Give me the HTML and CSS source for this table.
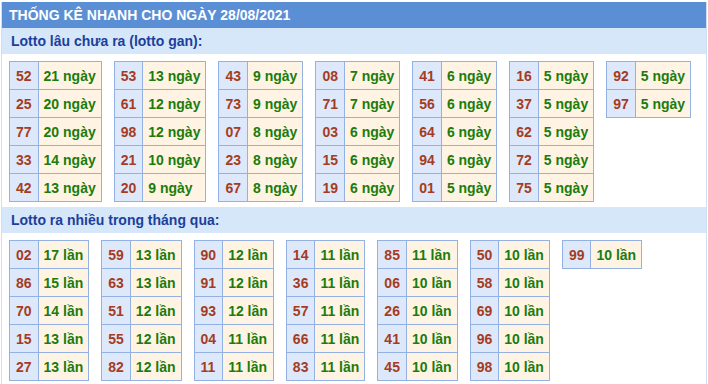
FILE: index.html
```html
<!DOCTYPE html>
<html lang="vi">
<head>
<meta charset="utf-8">
<link rel="stylesheet" href="styles.css">
</head>
<body>
<div class="box">
  <div class="head">THỐNG KÊ NHANH CHO NGÀY 28/08/2021</div>
  <div class="sub">Lotto lâu chưa ra (lotto gan):</div>
  <div class="grid">
    <table><tr><td class="n">52</td><td class="v">21 ngày</td></tr><tr><td class="n">25</td><td class="v">20 ngày</td></tr><tr><td class="n">77</td><td class="v">20 ngày</td></tr><tr><td class="n">33</td><td class="v">14 ngày</td></tr><tr><td class="n">42</td><td class="v">13 ngày</td></tr></table>
    <table><tr><td class="n">53</td><td class="v">13 ngày</td></tr><tr><td class="n">61</td><td class="v">12 ngày</td></tr><tr><td class="n">98</td><td class="v">12 ngày</td></tr><tr><td class="n">21</td><td class="v">10 ngày</td></tr><tr><td class="n">20</td><td class="v">9 ngày</td></tr></table>
    <table><tr><td class="n">43</td><td class="v">9 ngày</td></tr><tr><td class="n">73</td><td class="v">9 ngày</td></tr><tr><td class="n">07</td><td class="v">8 ngày</td></tr><tr><td class="n">23</td><td class="v">8 ngày</td></tr><tr><td class="n">67</td><td class="v">8 ngày</td></tr></table>
    <table><tr><td class="n">08</td><td class="v">7 ngày</td></tr><tr><td class="n">71</td><td class="v">7 ngày</td></tr><tr><td class="n">03</td><td class="v">6 ngày</td></tr><tr><td class="n">15</td><td class="v">6 ngày</td></tr><tr><td class="n">19</td><td class="v">6 ngày</td></tr></table>
    <table><tr><td class="n">41</td><td class="v">6 ngày</td></tr><tr><td class="n">56</td><td class="v">6 ngày</td></tr><tr><td class="n">64</td><td class="v">6 ngày</td></tr><tr><td class="n">94</td><td class="v">6 ngày</td></tr><tr><td class="n">01</td><td class="v">5 ngày</td></tr></table>
    <table><tr><td class="n">16</td><td class="v">5 ngày</td></tr><tr><td class="n">37</td><td class="v">5 ngày</td></tr><tr><td class="n">62</td><td class="v">5 ngày</td></tr><tr><td class="n">72</td><td class="v">5 ngày</td></tr><tr><td class="n">75</td><td class="v">5 ngày</td></tr></table>
    <table><tr><td class="n">92</td><td class="v">5 ngày</td></tr><tr><td class="n">97</td><td class="v">5 ngày</td></tr></table>
  </div>
  <div class="sub">Lotto ra nhiều trong tháng qua:</div>
  <div class="grid">
    <table><tr><td class="n">02</td><td class="v">17 lần</td></tr><tr><td class="n">86</td><td class="v">15 lần</td></tr><tr><td class="n">70</td><td class="v">14 lần</td></tr><tr><td class="n">15</td><td class="v">13 lần</td></tr><tr><td class="n">27</td><td class="v">13 lần</td></tr></table>
    <table><tr><td class="n">59</td><td class="v">13 lần</td></tr><tr><td class="n">63</td><td class="v">13 lần</td></tr><tr><td class="n">51</td><td class="v">12 lần</td></tr><tr><td class="n">55</td><td class="v">12 lần</td></tr><tr><td class="n">82</td><td class="v">12 lần</td></tr></table>
    <table><tr><td class="n">90</td><td class="v">12 lần</td></tr><tr><td class="n">91</td><td class="v">12 lần</td></tr><tr><td class="n">93</td><td class="v">12 lần</td></tr><tr><td class="n">04</td><td class="v">11 lần</td></tr><tr><td class="n">11</td><td class="v">11 lần</td></tr></table>
    <table><tr><td class="n">14</td><td class="v">11 lần</td></tr><tr><td class="n">36</td><td class="v">11 lần</td></tr><tr><td class="n">57</td><td class="v">11 lần</td></tr><tr><td class="n">66</td><td class="v">11 lần</td></tr><tr><td class="n">83</td><td class="v">11 lần</td></tr></table>
    <table><tr><td class="n">85</td><td class="v">11 lần</td></tr><tr><td class="n">06</td><td class="v">10 lần</td></tr><tr><td class="n">26</td><td class="v">10 lần</td></tr><tr><td class="n">41</td><td class="v">10 lần</td></tr><tr><td class="n">45</td><td class="v">10 lần</td></tr></table>
    <table><tr><td class="n">50</td><td class="v">10 lần</td></tr><tr><td class="n">58</td><td class="v">10 lần</td></tr><tr><td class="n">69</td><td class="v">10 lần</td></tr><tr><td class="n">96</td><td class="v">10 lần</td></tr><tr><td class="n">98</td><td class="v">10 lần</td></tr></table>
    <table><tr><td class="n">99</td><td class="v">10 lần</td></tr></table>
  </div>
</div>
</body>
</html>
```

FILE: styles.css
```css
html, body {
  margin: 0;
  padding: 0;
  background: #ffffff;
}
body {
  padding: 2px 0 0 0;
  font-family: "Liberation Sans", Arial, sans-serif;
}
.box {
  width: 704px;
  margin-left: 1px;
  border-left: 1px solid #cfdff3;
  border-right: 1px solid #cfdff3;
  min-height: 400px;
}
.head {
  background: #5b8fd5;
  color: #ffffff;
  font-weight: bold;
  font-size: 14px;
  height: 26px;
  line-height: 26px;
  padding-left: 7px;
}
.sub {
  background: #d6e7fa;
  color: #1c3f9c;
  font-weight: bold;
  font-size: 14px;
  height: 26px;
  line-height: 26px;
  padding-left: 9px;
}
.grid {
  display: flex;
  flex-wrap: wrap;
  align-items: flex-start;
  gap: 12px;
  padding: 7px 0 5px 7px;
}
table {
  border-collapse: collapse;
  font-weight: bold;
  font-size: 14px;
}
td {
  border: 1px solid #93b1e2;
  height: 27px;
  white-space: nowrap;
}
td.n {
  background: #dde9fb;
  color: #a53c22;
  padding: 0 6px;
}
td.v {
  background: #fff4e4;
  color: #1b7c0c;
  padding: 0 5px;
}
```
